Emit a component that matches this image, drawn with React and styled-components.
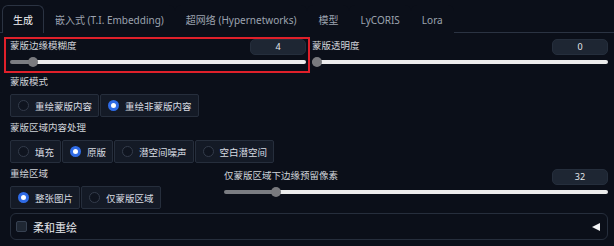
import React from 'react'
import styled, { createGlobalStyle } from 'styled-components'

const GlobalStyle = createGlobalStyle`
  html, body {
    margin: 0;
    padding: 0;
    background: #0b0f19;
  }
  body {
    width: 614px;
    height: 246px;
    overflow: hidden;
    font-family: "Noto Sans", "Noto Sans CJK SC", sans-serif;
    color: #d1d5db;
  }
  * { box-sizing: border-box; }
`

const Page = styled.div`
  padding-top: 5px;
`

const TabBar = styled.div`
  display: flex;
  height: 28px;
  padding-left: 2px;
  border-bottom: 1px solid #2b3342;
`

const Tab = styled.div`
  display: flex;
  align-items: center;
  padding: 0 10px;
  font-size: 10px;
  color: ${p => (p.$active ? '#f3f4f6' : '#9ca3af')};
  background: #0b0f19;
  border: 1px solid ${p => (p.$active ? '#2b3342' : 'transparent')};
  border-bottom: none;
  border-radius: 6px 6px 0 0;
  margin-bottom: -1px;
`

const Panel = styled.div`
  padding: 4px 6px 0 4px;
`

const TopRow = styled.div`
  display: flex;
  gap: 2px;
`

const Highlight = styled.div`
  width: 306px;
  border: 2px solid #e0202a;
  padding: 0 2px 2px 4px;
`

const Column = styled.div`
  flex: 1;
  padding-top: ${p => p.$top || 0}px;
`

const SliderHead = styled.div`
  display: flex;
  justify-content: space-between;
  align-items: flex-start;
  height: 16px;
`

const Label = styled.div`
  font-size: 9.5px;
  line-height: 13px;
  color: #d0d4da;
`

const NumberBox = styled.div`
  width: 56px;
  height: 16px;
  border-radius: 5px;
  background: #1e2633;
  border: 1px solid #252e3c;
  color: #e5e7eb;
  font-size: 9px;
  line-height: 14px;
  text-align: center;
`

const Track = styled.div`
  position: relative;
  height: 14px;
  display: flex;
  align-items: center;
`

const Line = styled.div`
  width: 100%;
  height: 4px;
  border-radius: 2px;
  background: linear-gradient(
    to right,
    #7b7d82 0,
    #7b7d82 ${p => p.$fill},
    #ececec ${p => p.$fill},
    #ececec 100%
  );
`

const Thumb = styled.div`
  position: absolute;
  top: 2px;
  width: 10px;
  height: 10px;
  margin-left: -5px;
  border-radius: 50%;
  background: #797a7e;
`

const Section = styled.div`
  margin-top: ${p => p.$top}px;
  padding-left: 6px;
`

const SectionLabel = styled(Label)`
  height: 14px;
  line-height: 14px;
  margin-bottom: 5px;
`

const RadioGroup = styled.div`
  display: flex;
  gap: 1px;
`

const RadioItem = styled.div`
  display: flex;
  align-items: center;
  gap: 6px;
  height: 23px;
  padding: 0 6px 0 7px;
  background: #141a26;
  border: 1px solid #262e3c;
  border-radius: 2px;
  font-size: 9.5px;
  color: #d8dce2;
`

const Dot = styled.span`
  width: 11px;
  height: 11px;
  border-radius: 50%;
  flex-shrink: 0;
  background: ${p => (p.$on ? '#ffffff' : '#0f141f')};
  border: ${p => (p.$on ? '3.5px solid #2f6be6' : '1px solid #343c4b')};
`

const SplitRow = styled.div`
  display: flex;
  margin-top: 4px;
`

const LeftPart = styled.div`
  width: 220px;
  padding-left: 6px;
`

const Accordion = styled.div`
  margin: 4px 0 0 6px;
  height: 27px;
  border: 1px solid #262e3c;
  border-radius: 6px;
  display: flex;
  align-items: center;
  padding: 0 7px 0 5px;
`

const Check = styled.span`
  width: 11px;
  height: 11px;
  border-radius: 2px;
  background: #1f2733;
  border: 1px solid #374151;
`

const AccordionTitle = styled.span`
  flex: 1;
  margin-left: 6px;
  font-size: 11px;
  color: #e5e7eb;
`

const Caret = styled.span`
  width: 0;
  height: 0;
  border-top: 4px solid transparent;
  border-bottom: 4px solid transparent;
  border-right: 8px solid #f3f4f6;
`

function Slider({ label, value, max }) {
  const pct = value / max
  const pos = `calc(5px + ${pct} * (100% - 10px))`
  return (
    <>
      <SliderHead>
        <Label>{label}</Label>
        <NumberBox>{value}</NumberBox>
      </SliderHead>
      <Track>
        <Line $fill={pos} />
        <Thumb style={{ left: pos }} />
      </Track>
    </>
  )
}

function Radios({ items, selected }) {
  return (
    <RadioGroup>
      {items.map(it => (
        <RadioItem key={it}>
          <Dot $on={it === selected} />
          {it}
        </RadioItem>
      ))}
    </RadioGroup>
  )
}

const tabs = ['生成', '嵌入式 (T.I. Embedding)', '超网络 (Hypernetworks)', '模型', 'LyCORIS', 'Lora']

export default function App() {
  return (
    <Page>
      <GlobalStyle />
      <TabBar>
        {tabs.map((t, i) => (
          <Tab key={t} $active={i === 0}>{t}</Tab>
        ))}
      </TabBar>
      <Panel>
        <TopRow>
          <Highlight>
            <Slider label="蒙版边缘模糊度" value={4} max={64} />
          </Highlight>
          <Column $top={2}>
            <Slider label="蒙版透明度" value={0} max={100} />
          </Column>
        </TopRow>

        <Section $top={2}>
          <SectionLabel>蒙版模式</SectionLabel>
          <Radios items={['重绘蒙版内容', '重绘非蒙版内容']} selected="重绘非蒙版内容" />
        </Section>

        <Section $top={4}>
          <SectionLabel>蒙版区域内容处理</SectionLabel>
          <Radios items={['填充', '原版', '潜空间噪声', '空白潜空间']} selected="原版" />
        </Section>

        <SplitRow>
          <LeftPart>
            <SectionLabel>重绘区域</SectionLabel>
            <Radios items={['整张图片', '仅蒙版区域']} selected="整张图片" />
          </LeftPart>
          <Column $top={2}>
            <Slider label="仅蒙版区域下边缘预留像素" value={32} max={256} />
          </Column>
        </SplitRow>

        <Accordion>
          <Check />
          <AccordionTitle>柔和重绘</AccordionTitle>
          <Caret />
        </Accordion>
      </Panel>
    </Page>
  )
}
